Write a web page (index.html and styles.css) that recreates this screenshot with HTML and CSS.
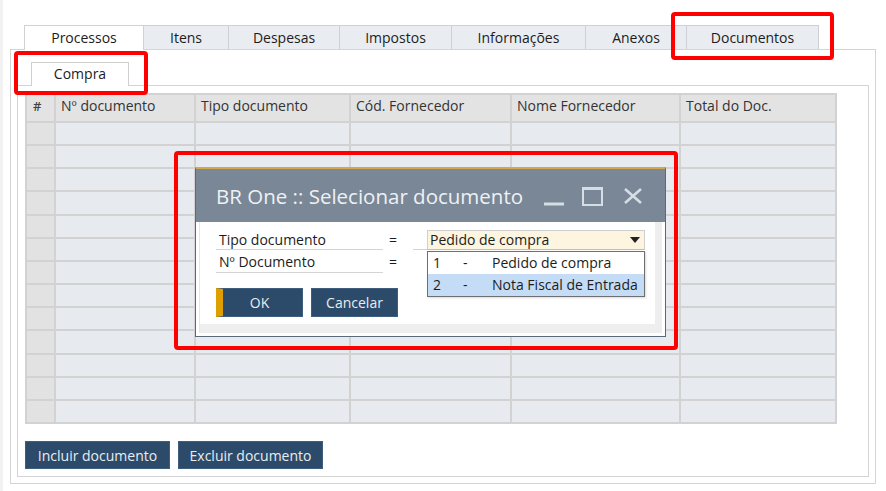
FILE: index.html
```html
<!DOCTYPE html>
<html lang="pt">
<head>
<meta charset="utf-8">
<title>BR One</title>
<link rel="stylesheet" href="styles.css">
</head>
<body>
<div class="app">
  <div class="tabs">
    <div class="tab active t1">Processos</div>
    <div class="tab t2">Itens</div>
    <div class="tab t3">Despesas</div>
    <div class="tab t4">Impostos</div>
    <div class="tab t5">Informações</div>
    <div class="tab t6">Anexos</div>
    <div class="tab t7">Documentos</div>
  </div>
  <div class="panel">
    <div class="subtabs">
      <div class="subtab">Compra</div>
    </div>
    <div class="subpanel">
      <div class="grid">
        <div class="h">#</div><div class="h">Nº documento</div><div class="h">Tipo documento</div><div class="h">Cód. Fornecedor</div><div class="h">Nome Fornecedor</div><div class="h">Total do Doc.</div>
        <div class="n"></div><div class="c"></div><div class="c"></div><div class="c"></div><div class="c"></div><div class="c"></div>
        <div class="n"></div><div class="c"></div><div class="c"></div><div class="c"></div><div class="c"></div><div class="c"></div>
        <div class="n"></div><div class="c"></div><div class="c"></div><div class="c"></div><div class="c"></div><div class="c"></div>
        <div class="n"></div><div class="c"></div><div class="c"></div><div class="c"></div><div class="c"></div><div class="c"></div>
        <div class="n"></div><div class="c"></div><div class="c"></div><div class="c"></div><div class="c"></div><div class="c"></div>
        <div class="n"></div><div class="c"></div><div class="c"></div><div class="c"></div><div class="c"></div><div class="c"></div>
        <div class="n"></div><div class="c"></div><div class="c"></div><div class="c"></div><div class="c"></div><div class="c"></div>
        <div class="n"></div><div class="c"></div><div class="c"></div><div class="c"></div><div class="c"></div><div class="c"></div>
        <div class="n"></div><div class="c"></div><div class="c"></div><div class="c"></div><div class="c"></div><div class="c"></div>
        <div class="n"></div><div class="c"></div><div class="c"></div><div class="c"></div><div class="c"></div><div class="c"></div>
        <div class="n"></div><div class="c"></div><div class="c"></div><div class="c"></div><div class="c"></div><div class="c"></div>
        <div class="n"></div><div class="c"></div><div class="c"></div><div class="c"></div><div class="c"></div><div class="c"></div>
        <div class="n"></div><div class="c"></div><div class="c"></div><div class="c"></div><div class="c"></div><div class="c"></div>
      </div>
      <div class="actions">
        <button class="btn">Incluir documento</button>
        <button class="btn">Excluir documento</button>
      </div>
    </div>
  </div>

  <div class="dialog">
    <div class="dlg-title">
      <span class="dlg-title-text">BR One :: Selecionar documento</span>
      <svg class="win-icons" width="99" height="20" viewBox="0 0 99 20">
        <rect x="0" y="16.5" width="20" height="3" fill="#d6dde4"/>
        <rect x="39" y="2" width="19" height="17" fill="none" stroke="#d6dde4" stroke-width="2"/>
        <rect x="38" y="1" width="21" height="3" fill="#d6dde4"/>
        <path d="M81 3 L97 17 M97 3 L81 17" stroke="#d6dde4" stroke-width="2.6" fill="none"/>
      </svg>
    </div>
    <div class="dlg-body">
      <div class="dlg-frame">
        <div class="dlg-content">
          <div class="form">
            <div class="lbl">Tipo documento</div>
            <div class="eq">=</div>
            <div class="fld"><div class="combo"><span>Pedido de compra</span><svg width="10" height="6" viewBox="0 0 10 6"><path d="M0 0 H10 L5 6 Z" fill="#222"/></svg></div></div>
            <div class="lbl">Nº Documento</div>
            <div class="eq">=</div>
            <div class="fld empty"></div>
          </div>
          <div class="dlg-actions">
            <button class="btn dbtn ok">OK</button>
            <button class="btn dbtn">Cancelar</button>
          </div>
        </div>
      </div>
    </div>
    <div class="dropdown">
      <div class="opt"><span class="k">1</span><span class="d">-</span><span>Pedido de compra</span></div>
      <div class="opt sel"><span class="k">2</span><span class="d">-</span><span>Nota Fiscal de Entrada</span></div>
    </div>
  </div>

  <div class="mark mark-docs"></div>
  <div class="mark mark-compra"></div>
  <div class="mark mark-dialog"></div>
</div>
</body>
</html>
```

FILE: styles.css
```css
* { box-sizing: border-box; }
html, body { margin: 0; padding: 0; background: #fff; }
body {
  font-family: "Open Sans", "Noto Sans", "DejaVu Sans", sans-serif;
  font-size: 14px;
  color: #1c1c1c;
  width: 886px;
  height: 491px;
  overflow: hidden;
}
.app {
  position: relative;
  width: 886px;
  height: 491px;
  padding: 25px 10px 7px 10px;
  background: linear-gradient(to right, #f2f2f2 3px, #fff 3px);
}

/* top tabs */
.tabs {
  display: flex;
  align-items: flex-start;
  height: 24px;
  margin-left: 14px;
}
.tab {
  height: 24px;
  line-height: 23px;
  text-align: center;
  border: 1px solid #cdd1d5;
  border-bottom: none;
  background: #e9edf1;
  margin-right: -1px;
  white-space: nowrap;
}
.tab.active {
  background: #fff;
  height: 25px;
  position: relative;
  z-index: 1;
  border-color: #d2d2d2;
}
.t1 { width: 120px; }
.t2 { width: 86px; }
.t3 { width: 112px; }
.t4 { width: 113px; }
.t5 { width: 135px; }
.t6 { width: 102px; }
.t7 { width: 133px; }

/* outer panel */
.panel {
  width: 866px;
  height: 435px;
  border: 1px solid #d4d4d4;
  padding: 12px 6px 6px 6px;
  background: #fff;
}
.subtabs {
  display: flex;
  height: 23px;
  padding-left: 14px;
}
.subtab {
  width: 98px;
  height: 24px;
  line-height: 22px;
  text-align: center;
  border: 1px solid #cfcfcf;
  border-bottom: none;
  background: #fff;
  position: relative;
  z-index: 1;
}
.subpanel {
  height: 392px;
  border: 1px solid #d4d4d4;
  padding: 7px;
}

/* grid */
.grid {
  display: grid;
  grid-template-columns: 27px 138px 153px 159px 167px 154px;
  grid-template-rows: 26px repeat(13, 1fr);
  gap: 2px;
  padding: 2px;
  width: 812px;
  height: 331px;
  background: #d2d2d2;
}
.grid .h {
  background: #e3e3e3;
  padding: 0 5px;
  line-height: 22px;
  color: #333;
  white-space: nowrap;
  overflow: hidden;
}
.grid .h:first-child { padding-left: 6px; font-weight: 600; color: #444; font-size: 13px; }
.grid .n { background: #e2e2e2; }
.grid .c { background: #e7ebf0; }

.actions {
  display: flex;
  gap: 8px;
  margin-top: 17px;
}
.btn {
  font-family: "Open Sans", "Noto Sans", "DejaVu Sans", sans-serif;
  font-size: 14px;
  color: #e9edf1;
  background: #2c4a6a;
  border: 1px solid #3f5d7c;
  height: 28px;
  width: 145px;
  padding: 0;
  margin: 0;
}

/* dialog */
.dialog {
  position: absolute;
  left: 195px;
  top: 167px;
  width: 471px;
  height: 170px;
  border: 1px solid #5b6a7a;
  border-top: 2px solid #d3a850;
  background: #fff;
  z-index: 5;
}
.dlg-title {
  height: 53px;
  background: #7a8797;
  display: flex;
  align-items: center;
  padding: 0 22px 0 20px;
}
.dlg-title-text {
  font-size: 20.5px;
  color: #eef1f4;
  white-space: nowrap;
}
.win-icons { margin-left: auto; }
.dlg-body {
  height: 114px;
  background: #fff;
  padding: 0 3px 3px 3px;
}
.dlg-frame {
  height: 111px;
  background: #eeeeee;
  padding: 0 7px 9px 0;
  border-left: 1px solid #e6e6e6;
}
.dlg-content {
  height: 102px;
  background: #fff;
  padding: 8px 0 0 16px;
}
.form {
  display: grid;
  grid-template-columns: 167px 30px 232px;
  grid-template-rows: 20px 21px;
  row-gap: 2px;
}
.lbl {
  border-bottom: 1px solid #d4d4d4;
  padding-left: 3px;
  line-height: 20px;
  white-space: nowrap;
}
.eq {
  padding-left: 6px;
  line-height: 20px;
}
.fld {
  padding-left: 14px;
  border-bottom: 1px solid #d4d4d4;
}
.fld.empty { border-bottom: none; }
.combo {
  height: 20px;
  background: #fdf5df;
  border: 1px solid #cfcfcf;
  border-bottom-color: #bdbdbd;
  display: flex;
  align-items: center;
  justify-content: space-between;
  padding: 0 4px 0 2px;
  line-height: 18px;
  white-space: nowrap;
}
.dlg-actions {
  display: flex;
  gap: 8px;
  margin-top: 15px;
}
.dbtn {
  width: 87px;
  height: 29px;
}
.ok { border-left: 7px solid #e09f00; padding-right: 6px; }
.dropdown {
  position: absolute;
  left: 231px;
  top: 82px;
  width: 218px;
  height: 46px;
  background: #fff;
  border: 1px solid #6e6e6e;
  box-shadow: 1px 1px 2px rgba(0,0,0,0.15);
}
.opt {
  height: 22px;
  line-height: 22px;
  display: flex;
  padding-left: 5px;
  white-space: nowrap;
}
.opt .k { width: 30px; }
.opt .d { width: 29px; }
.opt.sel { background: #c5dcf6; }

/* red highlight marks */
.mark {
  position: absolute;
  border: 4px solid #ff0000;
  border-radius: 4px;
  z-index: 10;
}
.mark-docs { left: 671px; top: 12px; width: 163px; height: 48px; }
.mark-compra { left: 14px; top: 51px; width: 134px; height: 44px; }
.mark-dialog { left: 174px; top: 151px; width: 504px; height: 199px; }
```
